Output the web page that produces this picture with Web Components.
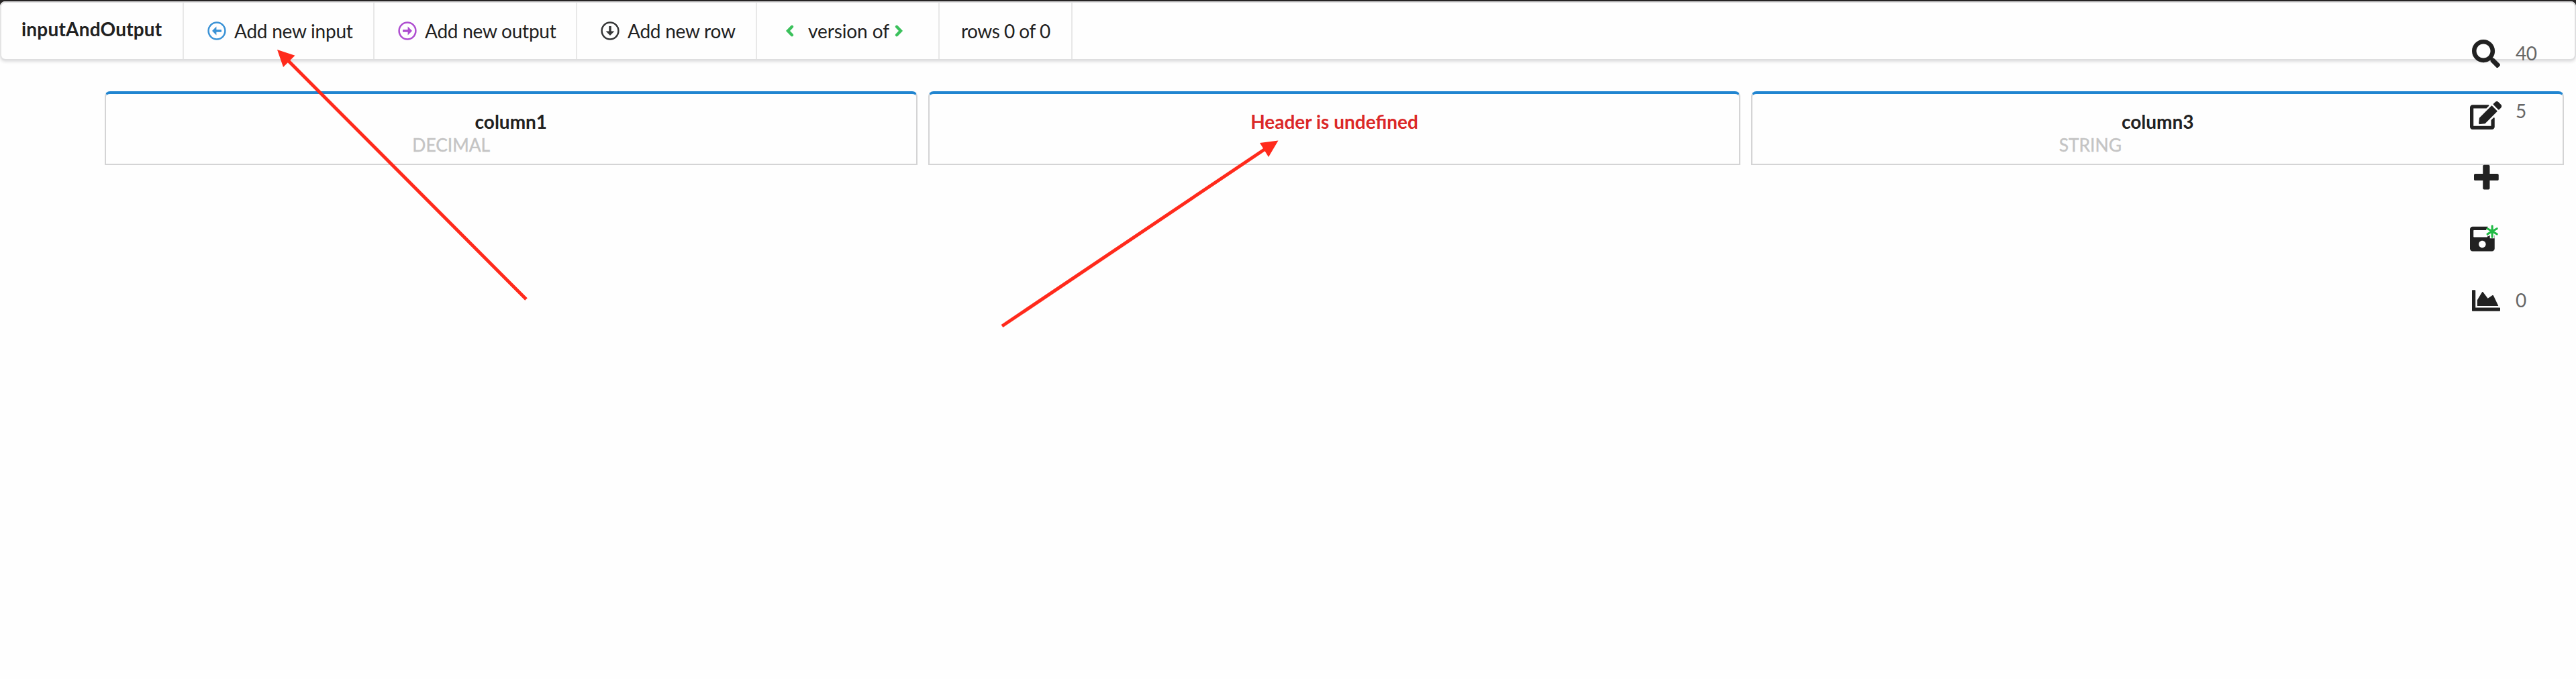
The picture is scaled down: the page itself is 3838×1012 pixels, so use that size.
<!DOCTYPE html>
<html lang="en">
<head>
<meta charset="utf-8">
<title>inputAndOutput</title>
<style>
html,body{margin:0;height:100%;background:#fefefe}
body{font:28px/40px Lato,sans-serif;color:#212121;overflow:hidden}
</style>
</head>
<body>
<decision-table></decision-table>
<script>
const ICONS = {
  left: ['0 0 28 28', '<circle cx="14" cy="14" r="12.4" fill="none" stroke="currentColor" stroke-width="2.5"/><path d="M7 14l6.4-6.4v4.7h7.6v3.4h-7.6v4.7z"/>'],
  right: ['0 0 28 28', '<circle cx="14" cy="14" r="12.4" fill="none" stroke="currentColor" stroke-width="2.5"/><path d="M21 14l-6.4-6.4v4.700H7v3.4h7.600v4.700z"/>'],
  down: ['0 0 28 28', '<circle cx="14" cy="14" r="12.4" fill="none" stroke="currentColor" stroke-width="2.5"/><path d="M14 21l-6.400-6.400h4.700V7h3.400v7.600h4.700z"/>'],
  prev: ['0 0 12 18', '<path d="M9 2.800L3 9l6 6.200" fill="none" stroke="currentColor" stroke-width="4.400" stroke-linecap="round"/>'],
  next: ['0 0 12 18', '<path d="M3 2.800L9 9l-6 6.200" fill="none" stroke="currentColor" stroke-width="4.400" stroke-linecap="round"/>'],
  search: ['0 0 512 512', '<path d="M505 442.7L405.3 343c-4.5-4.5-10.6-7-17-7H372c27.6-35.3 44-79.7 44-128C416 93.1 322.9 0 208 0S0 93.1 0 208s93.1 208 208 208c48.3 0 92.7-16.4 128-44v16.3c0 6.4 2.5 12.5 7 17l99.7 99.7c9.4 9.4 24.6 9.4 33.9 0l28.3-28.3c9.4-9.4 9.4-24.6.1-34zM208 336c-70.7 0-128-57.2-128-128 0-70.7 57.2-128 128-128 70.7 0 128 57.2 128 128 0 70.7-57.2 128-128 128z"/>'],
  edit: ['0 0 576 512', '<path d="M402.6 83.2l90.2 90.2c3.8 3.8 3.8 10 0 13.8L274.4 405.6l-92.8 10.3c-12.4 1.4-22.9-9.1-21.5-21.5l10.3-92.8L388.8 83.2c3.8-3.8 10-3.8 13.8 0zm162-22.9l-48.8-48.8c-15.2-15.2-39.9-15.2-55.2 0l-35.4 35.4c-3.8 3.8-3.8 10 0 13.8l90.2 90.2c3.8 3.8 10 3.8 13.8 0l35.4-35.4c15.2-15.3 15.2-40 0-55.2zM384 346.2V448H64V128h229.8c3.2 0 6.2-1.3 8.5-3.5l40-40c7.6-7.6 2.2-20.5-8.5-20.5H48C21.5 64 0 85.5 0 112v352c0 26.5 21.5 48 48 48h352c26.5 0 48-21.5 48-48V306.2c0-10.7-12.9-16-20.5-8.5l-40 40c-2.2 2.3-3.5 5.3-3.5 8.5z"/>'],
  plus: ['0 0 448 512', '<path d="M448 294.2v-76.4c0-13.3-10.7-24-24-24H286.2V56c0-13.3-10.7-24-24-24h-76.4c-13.3 0-24 10.7-24 24v137.8H24c-13.3 0-24 10.7-24 24v76.4c0 13.3 10.7 24 24 24h137.8V456c0 13.3 10.7 24 24 24h76.4c13.3 0 24-10.7 24-24V318.2H424c13.3 0 24-10.7 24-24z"/>'],
  save: ['0 0 576 512', '<path d="M433.941 129.941l-83.882-83.882A48 48 0 0 0 316.118 32H48C21.49 32 0 53.49 0 80v352c0 26.51 21.49 48 48 48h352c26.51 0 48-21.49 48-48V163.882a48 48 0 0 0-14.059-33.941zM224 416c-35.346 0-64-28.654-64-64s28.654-64 64-64 64 28.654 64 64-28.654 64-64 64zm96-304.52V212c0 6.627-5.373 12-12 12H76c-6.627 0-12-5.373-12-12V108c0-6.627 5.373-12 12-12h228.52c3.183 0 6.235 1.264 8.485 3.515l3.48 3.48A11.996 11.996 0 0 1 320 111.48z"/><path d="M404 22v226M308 66l192 108M500 66L308 174" stroke="#fefefe" stroke-width="84"/><path d="M404 22v200M318 70l172 100M490 70L318 170" stroke="#21ba45" stroke-width="38" stroke-linecap="round"/>'],
  chart: ['0 0 512 512', '<path d="M500 384c6.6 0 12 5.4 12 12v40c0 6.6-5.4 12-12 12H12c-6.6 0-12-5.4-12-12V76c0-6.6 5.4-12 12-12h40c6.6 0 12 5.4 12 12v308h436zM372.7 159.5L288 216l-85.3-113.7c-5.1-6.8-15.5-6.3-19.9 1L96 248v104h384l-89.9-187.8c-3.2-6.5-11.4-8.7-17.4-4.7z"/>']
};
function define(name, render) {
  customElements.define(name, class extends HTMLElement {
    connectedCallback() {
      if (this.shadowRoot) return;
      this.attachShadow({mode: 'open'}).innerHTML = render(this);
    }
  });
}
define('ui-icon', el => {
  const [box, body] = ICONS[el.getAttribute('name')];
  return `<style>:host{display:block;flex:none}svg{display:block;width:100%;height:100%;fill:currentColor;overflow:visible}</style><svg viewBox="${box}">${body}</svg>`;
});
define('menu-item', () => `<style>
:host{display:flex;box-sizing:border-box;height:84px;align-items:center;padding:0 0 1px var(--pad,34px);border-right:2px solid #e8e8e8;white-space:nowrap}
</style><slot></slot>`);
define('tool-bar', () => `<style>
:host{display:block;background:#282626;padding-top:2px}
nav{display:flex;box-sizing:border-box;height:88px;border:2px solid #dededf;border-left-color:#e4e4e4;border-radius:8px;background:#fefefe;box-shadow:0 2px 4px rgba(34,36,38,.15)}
.page{background:#fefefe;border-radius:8px 8px 0 0}
menu-item{letter-spacing:-.24px}
menu-item:nth-child(1){width:272px;--pad:30px;font-weight:700;letter-spacing:.2px;padding-bottom:6px}
menu-item:nth-child(2){width:284px;--pad:35px}
menu-item:nth-child(3){width:302px;--pad:35px}
menu-item:nth-child(4){width:268px;--pad:35px}
menu-item:nth-child(5){width:272px;--pad:43px;letter-spacing:-.1px}
menu-item:nth-child(6){width:198px;--pad:32px;letter-spacing:-.5px}
ui-icon{width:28px;height:28px;margin-right:12px}
ui-icon.ch{width:12px;height:18px;color:#3bc15c}
.first{margin-right:21px}.last{margin:0 0 0 8px}
</style><div class="page"><nav>
<menu-item>inputAndOutput</menu-item>
<menu-item><ui-icon name="left" style="color:#3b93d6"></ui-icon><span>Add new input</span></menu-item>
<menu-item><ui-icon name="right" style="color:#ae4dd0"></ui-icon><span>Add new output</span></menu-item>
<menu-item><ui-icon name="down" style="color:#353637"></ui-icon><span>Add new row</span></menu-item>
<menu-item><ui-icon class="ch first" name="prev"></ui-icon><span>version of</span><ui-icon class="ch last" name="next"></ui-icon></menu-item>
<menu-item><span>rows 0 of 0</span></menu-item>
</nav></div>`);
define('column-card', el => `<style>
:host{display:flex;flex:1;box-sizing:border-box;height:110px;flex-direction:column;align-items:center;border:2px solid #d4d4d5;border-top:4px solid #2185d0;border-radius:8px 8px 0 0;background:#fefefe;padding-top:24px;line-height:34px}
b{color:var(--title,inherit)}
small{font-size:26.4px;color:#c4c4c4;width:294px;-webkit-text-stroke:.4px #c4c4c4;padding-top:1px}
</style><b><slot></slot></b>${el.hasAttribute('type') ? `<small>${el.getAttribute('type')}</small>` : ''}`);
define('side-action', el => `<style>
:host{display:flex;height:42px;align-items:center}
div{width:48px;display:flex;justify-content:center;margin-right:20px}
ui-icon{height:42px;width:${el.getAttribute('w')}px}
span{color:#666;letter-spacing:-.5px;margin-top:var(--dy,-2px)}
</style><div><ui-icon name="${el.getAttribute('icon')}"></ui-icon></div><span><slot></slot></span>`);
define('side-bar', () => `<style>
:host{position:absolute;left:3680px;top:59px;display:flex;flex-direction:column;gap:50px;color:#212121}
</style>
<side-action icon="search" w="42">40</side-action>
<side-action icon="edit" w="47.25" style="--dy:-14px">5</side-action>
<side-action icon="plus" w="36.75"></side-action>
<side-action icon="save" w="47.25"></side-action>
<side-action icon="chart" w="42">0</side-action>`);
define('note-arrows', () => `<style>
:host{position:absolute;inset:0;pointer-events:none}svg{display:block}
</style><svg width="3838" height="1012" fill="#ff2a1c" stroke="#ff2a1c">
<path d="M784 446L426 87M1493 486L1888 220" stroke-width="5" fill="none"/>
<path d="M413 74l26.500 8.700L422 100zM1904.500 209.500L1877 213l13 21z" stroke="none"/></svg>`);
define('decision-table', () => `<style>
:host{display:block;position:relative;height:1012px}
main{display:flex;gap:16px;padding:46px 18px 0 156px}
</style>
<tool-bar></tool-bar>
<main>
<column-card type="DECIMAL">column1</column-card>
<column-card style="--title:#db2828">Header is undefined</column-card>
<column-card type="STRING">column3</column-card>
</main>
<side-bar></side-bar>
<note-arrows></note-arrows>`);
</script>
</body>
</html>
